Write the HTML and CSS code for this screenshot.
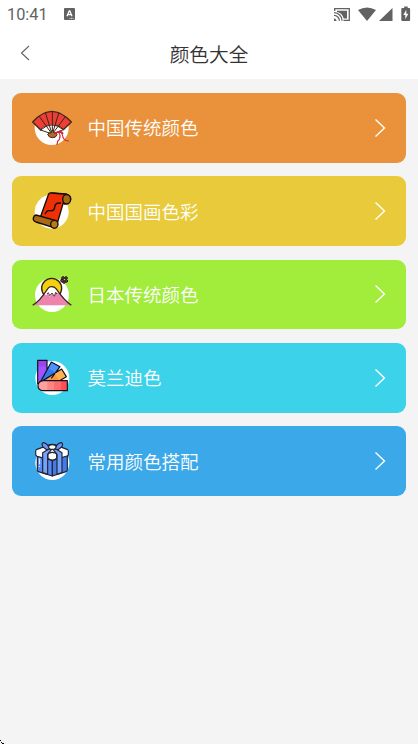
FILE: index.html
```html
<!DOCTYPE html>
<html lang="zh-CN">
<head>
<meta charset="utf-8">
<title>颜色大全</title>
<link rel="stylesheet" href="styles.css">
</head>
<body>
<header class="top">
  <div class="status">
    <span class="time">10:41</span>
    <svg class="input-badge" viewBox="0 0 11 12"><rect width="11" height="12" rx="1" fill="#626262"/><path d="M3 8.3 5.2 3h.6L8 8.3M3.8 6.6h3.4" fill="none" stroke="#fff" stroke-width="1.3"/><path d="M5.5 10.4h4" stroke="#fff" stroke-width=".8" stroke-dasharray="1 .5"/></svg>
    <svg class="system" viewBox="0 0 80 18">
      <g fill="none" stroke="#626262" stroke-width="1.3"><path d="M1.700 7V4.700h14.600v11.600H10.500M1 11.400a5.400 5.400 0 0 1 5.400 5.400M1 8.700a8.100 8.100 0 0 1 8.100 8.100"/></g>
      <path d="M1 14.400a2.500 2.500 0 0 1 2.500 2.500H1zM4 6.800h10v7.600h-3.300C9.700 10.500 7.500 8.500 4 7.900z" fill="#626262"/>
      <path d="M25 6q9-5 18 0l-9 11zM59.500 4v13H46zM68.300 5q0-1 1-1h1.900V2.500h3.500V4h1.400q1 0 1 1v11q0 1-1 1h-6.800q-1 0-1-1z" fill="#626262"/>
      <path d="m73.300 5.800-3 5.300h2v4.100l3-5.500h-2z" fill="#fff"/>
    </svg>
  </div>
  <div class="nav">
    <svg class="back" viewBox="0 0 10 16"><path d="M9 1 1.500 8 9 15"/></svg>
    <h1>颜色大全</h1>
  </div>
</header>
<main class="list">
  <a class="card orange">
    <svg class="icon" viewBox="0 0 180 180">
      <circle cx="80" cy="90" r="51" fill="#fff"/>
      <path d="M23 72Q80 8 139 72L115 95Q107 85 94 82L82 104 69 83Q55 87 47 96Z" fill="#ee3e38" stroke="#3f2514" stroke-width="4" stroke-linejoin="round"/>
      <path d="M47 95Q80 65 115 95L83 108Z" fill="#fff"/>
      <path d="m42 54 39 54M61 43l20 65M82 39v69M102 43l-20 65M122 55l-40 53M47 96l35 12 33-13M47 96Q80 66 115 95" fill="none" stroke="#3f2514" stroke-width="3"/>
      <path d="M68 109q3-6 10-4l4-9 5 9q8-2 9 5-3 10-14 9-11 0-14-10z" fill="#b96831" stroke="#3f2514" stroke-width="3"/>
      <path d="M89 107q12-11 16 5 1 12-7 18l-2 9M93 105q18-7 20 9 2 14 17 15M91 107q15-14 23-1" fill="none" stroke="#d42335" stroke-width="3.500" stroke-linecap="round"/>
    </svg>
    <span>中国传统颜色</span>
    <svg class="arrow" viewBox="0 0 12 20"><path d="m1.500 1.500 9 8.500-9 8.500"/></svg>
  </a>
  <a class="card yellow">
    <svg class="icon" viewBox="0 0 180 180">
      <circle cx="80" cy="92" r="51" fill="#fff"/>
      <g stroke="#160c08" stroke-width="4" stroke-linejoin="round">
        <path d="M79 36 123 39Q137 43 137 54q-2 15-19 15l-12-7z" fill="#a86a13"/>
        <path d="M79 36q-7-2-10 8L46 109l52 14 19-65q2-14 7-18z" fill="#ef3005"/>
        <ellipse cx="125" cy="55" rx="12" ry="14" fill="#a86a13"/>
        <path d="m33 102 60 17q-12 7-9 20l-51-16q-10-4-8-12 2-8 8-9z" fill="#a86a13"/>
        <ellipse cx="88" cy="130" rx="11" ry="12" fill="#b77c15"/>
        <path d="m60 99 5-7q3-4 11-3 11 2 13-9 0-12 11-14h8" fill="none"/>
      </g>
    </svg>
    <span>中国国画色彩</span>
    <svg class="arrow" viewBox="0 0 12 20"><path d="m1.500 1.500 9 8.500-9 8.500"/></svg>
  </a>
  <a class="card green">
    <svg class="icon" viewBox="0 0 180 180">
      <circle cx="81" cy="93" r="51" fill="#fff"/>
      <circle cx="80" cy="73" r="30" fill="#f6d00b" stroke="#29231c" stroke-width="4"/>
      <path d="M57 90 69 73q3-5 11-5t13 6l12 15-8 14H64z" fill="#fff"/>
      <path d="M23 124Q43 113 57 90l7 4 4-7 6 11 7-10 7 10 4-13 13 4q15 19 34 35z" fill="#ec84ac"/>
      <path d="M23 124Q43 113 69 73q3-5 11-5t13 6q26 37 46 50" fill="none" stroke="#2b2025" stroke-width="3.500"/>
      <path d="m66 90 4-4 4 9 7-8 7 10 4-12 4 5" fill="none" stroke="#2b2025" stroke-width="2.500"/>
      <g fill="#8c3658" stroke="#231820" stroke-width="3"><circle cx="114" cy="42" r="4"/><circle cx="123" cy="42" r="4"/><circle cx="111" cy="50" r="4"/><circle cx="124" cy="51" r="4"/><circle cx="117" cy="54" r="4"/></g>
    </svg>
    <span>日本传统颜色</span>
    <svg class="arrow" viewBox="0 0 12 20"><path d="m1.500 1.500 9 8.500-9 8.500"/></svg>
  </a>
  <a class="card cyan">
    <svg class="icon" viewBox="0 0 180 180">
      <circle cx="82" cy="90" r="51" fill="#fff"/>
      <g stroke-linejoin="round">
        <path d="M38 37h28v44l-20 25-8-6z" fill="#a451ff"/><path d="M38 37h28v18H38z" fill="#9b42f2"/>
        <path d="m79 42 26 14-34 45H43z" fill="#3978ec"/><path d="m79 42 26 14-12 19-24-14z" fill="#4b93ff"/>
        <path d="m110 63 14 23-49 27-27-7z" fill="#f79b43"/><path d="m110 63 14 23-21 12-15-22z" fill="#ffb052"/>
        <path d="M54 98h73v30H54q-15-2-15-15t15-15z" fill="#ffa09d"/><path d="M67 98h20v30H67z" fill="#ff8582"/><path d="M87 98h20v30H87z" fill="#ff6c6d"/><path d="M107 98h20v30h-20z" fill="#ff4f54"/>
        <path d="M38 109V37h28v32M48 99l31-57 26 14-26 35M50 100l60-37 14 23-20 12M54 98h73v30H54q-15-2-15-15t15-15z" fill="none" stroke="#10131d" stroke-width="3.500"/>
      </g>
    </svg>
    <span>莫兰迪色</span>
    <svg class="arrow" viewBox="0 0 12 20"><path d="m1.500 1.500 9 8.500-9 8.500"/></svg>
  </a>
  <a class="card blue">
    <svg class="icon" viewBox="0 0 180 180">
      <circle cx="82" cy="96" r="51" fill="#fff"/>
      <g stroke="#20242f" stroke-width="3.500" stroke-linejoin="round">
        <path d="M37 72 82 84v51l-42-13q-3-2-3-6z" fill="#558af5"/>
        <path d="m82 84 45-12v44q0 4-4 6l-41 13z" fill="#457be9"/>
        <path d="M32 61q0-4 4-6l39-14q7-2 14 0l37 14q4 2 4 6v9q0 4-4 5L82 88 36 76q-4-2-4-7z" fill="#fff"/>
        <path d="m53 65 22-13h7L68 70v60l-15-5zM111 65 90 52h-8l14 18v60l15-5z" fill="#76a0ff"/>
        <path d="M75 54Q65 34 54 35q-6 4 1 14l10 7zM89 54q9-20 21-19 6 4-1 14l-10 7z" fill="#6c96f8"/>
        <ellipse cx="82" cy="48" rx="11" ry="7" fill="#fff"/>
        <path d="M69 70q2-6 13-6t13 6v11q-4 6-13 6t-13-6z" fill="#fff"/>
      </g>
      <path d="M44 82v18M44 105v3" stroke="#fff" stroke-width="3"/>
    </svg>
    <span>常用颜色搭配</span>
    <svg class="arrow" viewBox="0 0 12 20"><path d="m1.500 1.500 9 8.500-9 8.500"/></svg>
  </a>
</main>
<svg class="corner" viewBox="0 0 4 4"><path d="M0 0h1v1H0zM1 2h1v1H1zM2 3h2v1H2z"/></svg>
</body>
</html>
```
FILE: styles.css
```css
* { box-sizing: border-box; }
body {
  margin: 0;
  height: 744px;
  overflow: hidden;
  background: #f4f4f4;
  font-family: "Noto Sans CJK SC", sans-serif;
}
.top { height: 79px; background: #fff; }
.status { height: 29px; display: flex; align-items: center; padding: 0 5px 0 7px; }
.time { width: 57px; font: 16.300px/28px Roboto, sans-serif; color: #626262; }
.input-badge { width: 11px; height: 12px; margin-top: -1px; }
.system { width: 80px; height: 18px; margin: -3px 0 0 auto; }
.nav { height: 50px; display: grid; grid-template-columns: 60px 1fr 60px; align-items: center; }
.back { width: 10px; height: 16px; margin: 0 0 2px 20px; fill: none; stroke: #626262; stroke-width: 1.100; }
h1 { margin: 0; text-align: center; font-size: 19.700px; line-height: 30px; font-weight: 350; color: #333; }
.list { padding: 14px 12px; display: flex; flex-direction: column; gap: 13.670px; }
.card { height: 69.670px; padding: 0 20px 0 13px; border-radius: 9px; display: flex; align-items: center; color: #fff; font-size: 18.500px; line-height: 28px; }
.card span { margin: 0 0 1px 2.500px; flex: 1; font-weight: 350; }
.icon { width: 60px; height: 60px; }
.arrow { width: 12px; height: 20px; fill: none; stroke: #fff; stroke-width: 1.400; }
.orange { background: #e9923b; }
.yellow { background: #e8ca3b; }
.green { background: #a2ec3b; }
.cyan { background: #3bd2ea; }
.blue { background: #3ba8e9; }
.corner { position: absolute; left: 0; bottom: 0; width: 4px; height: 4px; }
```
